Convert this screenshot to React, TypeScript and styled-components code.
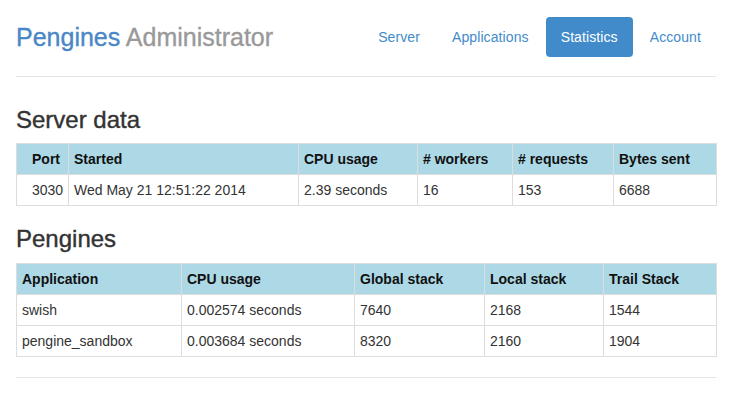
import React from "react";
import styled, { createGlobalStyle } from "styled-components";

const GlobalStyle = createGlobalStyle`
  html, body {
    margin: 0;
    padding: 0;
    background: #fff;
  }
  body {
    font-family: "Liberation Sans", Arial, Helvetica, sans-serif;
    font-size: 14px;
    line-height: 1.42857;
    color: #333;
  }
`;

type Col = { label: string; width: number; inset?: boolean };

const serverCols: Col[] = [
  { label: "Port", width: 52, inset: true },
  { label: "Started", width: 230 },
  { label: "CPU usage", width: 119 },
  { label: "# workers", width: 95 },
  { label: "# requests", width: 101 },
  { label: "Bytes sent", width: 103 },
];

const serverRows = [["3030", "Wed May 21 12:51:22 2014", "2.39 seconds", "16", "153", "6688"]];

const pengineCols: Col[] = [
  { label: "Application", width: 165 },
  { label: "CPU usage", width: 173 },
  { label: "Global stack", width: 130 },
  { label: "Local stack", width: 119 },
  { label: "Trail Stack", width: 113 },
];

const pengineRows = [
  ["swish", "0.002574 seconds", "7640", "2168", "1544"],
  ["pengine_sandbox", "0.003684 seconds", "8320", "2160", "1904"],
];

const navItems = ["Server", "Applications", "Statistics", "Account"];

const DataTable = ({ cols, rows }: { cols: Col[]; rows: string[][] }) => (
  <Table>
    <colgroup>
      {cols.map((c) => (
        <col key={c.label} style={{ width: c.width }} />
      ))}
    </colgroup>
    <thead>
      <tr>
        {cols.map((c) => (
          <Th key={c.label} $inset={c.inset}>
            {c.label}
          </Th>
        ))}
      </tr>
    </thead>
    <tbody>
      {rows.map((r, i) => (
        <tr key={i}>
          {r.map((v, j) => (
            <Td key={j} $inset={cols[j].inset}>
              {v}
            </Td>
          ))}
        </tr>
      ))}
    </tbody>
  </Table>
);

const App = () => {
  return (
    <Page>
      <GlobalStyle />
      <Header>
        <Brand>
          <span className="name">Pengines</span> <span className="role">Administrator</span>
        </Brand>
        <Nav>
          {navItems.map((n) => (
            <Pill key={n} $active={n === "Statistics"}>
              {n}
            </Pill>
          ))}
        </Nav>
      </Header>
      <Title>Server data</Title>
      <DataTable cols={serverCols} rows={serverRows} />
      <Title>Pengines</Title>
      <DataTable cols={pengineCols} rows={pengineRows} />
      <Footer />
    </Page>
  );
};

const Page = styled.div`
  width: 700px;
  padding: 17px 0 0 16px;
`;

const Header = styled.div`
  display: flex;
  justify-content: space-between;
  align-items: flex-start;
  padding-bottom: 19px;
  border-bottom: 1px solid #e5e5e5;
  margin-bottom: 30px;
`;

const Brand = styled.h3`
  margin: 0;
  font-size: 25px;
  font-weight: normal;
  line-height: 40px;
  -webkit-text-stroke: 0.35px currentColor;
  .name {
    color: #4a87c6;
  }
  .role {
    color: #999;
  }
`;

const Nav = styled.ul`
  display: flex;
  list-style: none;
  margin: 0;
  padding: 0;
  gap: 2px;
`;

const Pill = styled.li<{ $active?: boolean }>`
  padding: 10px 15px;
  line-height: 20px;
  letter-spacing: 0.1px;
  border-radius: 4px;
  cursor: pointer;
  color: ${(p) => (p.$active ? "#fff" : "#428bca")};
  background: ${(p) => (p.$active ? "#428bca" : "transparent")};
`;

const Title = styled.h3`
  margin: 20px 0 10px;
  font-size: 24px;
  font-weight: normal;
  line-height: 1.1;
  color: #333;
  -webkit-text-stroke: 0.4px currentColor;
`;

const Table = styled.table`
  width: 700px;
  table-layout: fixed;
  border-collapse: collapse;
  border: 1px solid #ddd;
  margin-bottom: 20px;
`;

const Th = styled.th<{ $inset?: boolean }>`
  padding: 5px;
  padding-left: ${(p) => (p.$inset ? "15px" : "5px")};
  line-height: 20px;
  text-align: left;
  font-weight: bold;
  color: #111;
  background: #add8e6;
  border: 1px solid #ddd;
  white-space: nowrap;
`;

const Td = styled.td<{ $inset?: boolean }>`
  padding: 5px;
  padding-left: ${(p) => (p.$inset ? "15px" : "5px")};
  line-height: 20px;
  text-align: left;
  border: 1px solid #ddd;
  white-space: nowrap;
`;

const Footer = styled.div`
  border-top: 1px solid #e5e5e5;
  padding-top: 19px;
`;

export default App;
